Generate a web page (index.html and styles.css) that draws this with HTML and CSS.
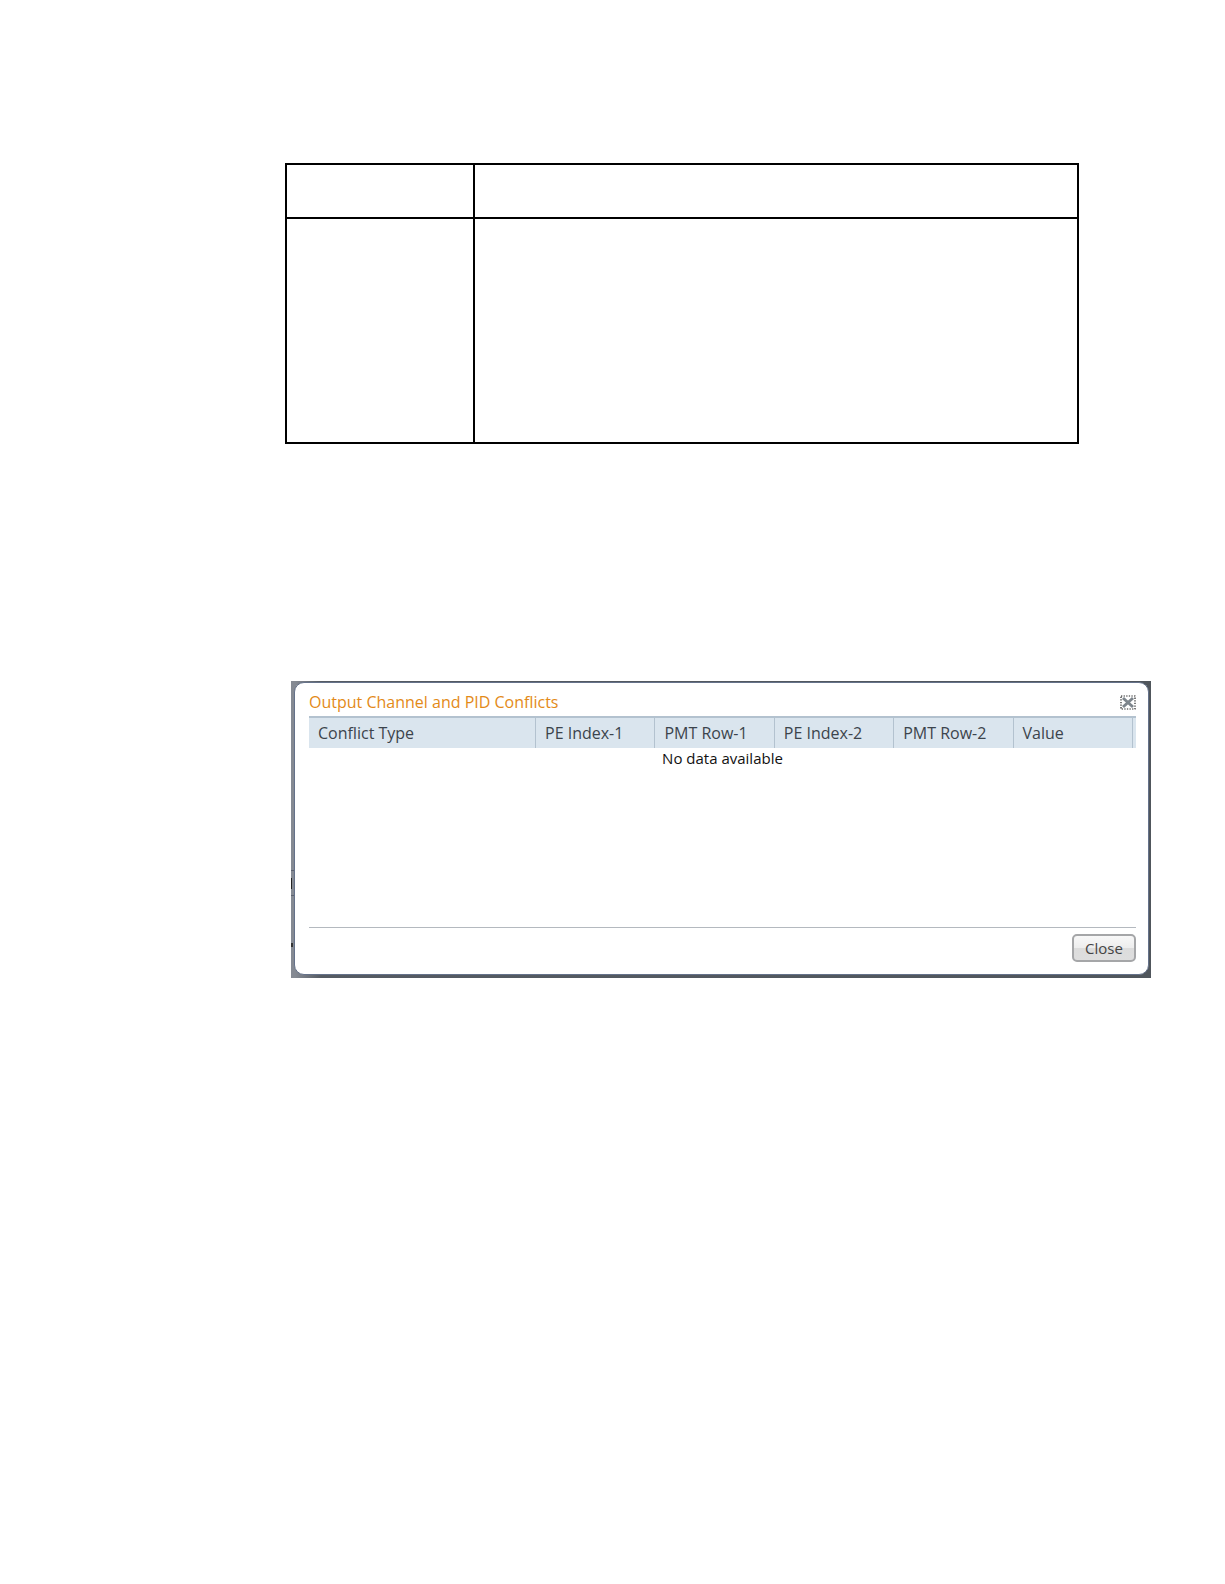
FILE: index.html
```html
<!DOCTYPE html>
<html lang="en">
<head>
<meta charset="utf-8">
<title>Output Channel and PID Conflicts</title>
<link rel="stylesheet" href="styles.css">
</head>
<body>
<main class="page">
  <table class="reference">
    <colgroup><col class="reference-term"><col></colgroup>
    <tbody>
      <tr class="reference-head"><td></td><td></td></tr>
      <tr class="reference-body"><td></td><td></td></tr>
    </tbody>
  </table>

  <div class="backdrop">
    <section class="dialog" role="dialog" aria-labelledby="dialog-title">
      <header class="dialog-header">
        <h1 class="dialog-title" id="dialog-title">Output Channel and PID Conflicts</h1>
        <button class="dismiss" type="button" aria-label="Dismiss">
          <svg width="16" height="15" viewBox="0 0 16 15" fill="none">
            <rect x="1" y="1" width="14" height="13" stroke="#222" stroke-width="1.2" stroke-dasharray="1.3 1.3"/>
            <path d="M3 3 13 12M13 3 3 12" stroke="#7d858c" stroke-width="3"/>
          </svg>
        </button>
      </header>
      <div class="grid-area">
        <table class="conflicts">
          <colgroup><col class="col-type"><col><col><col><col><col><col class="col-end"></colgroup>
          <thead>
            <tr><th>Conflict Type</th><th>PE Index-1</th><th>PMT Row-1</th><th>PE Index-2</th><th>PMT Row-2</th><th>Value</th><td class="head-end"></td></tr>
          </thead>
          <tbody>
            <tr><td class="empty" colspan="7">No data available</td></tr>
          </tbody>
        </table>
      </div>
      <footer class="dialog-footer">
        <button class="close" type="button">Close</button>
      </footer>
    </section>
  </div>
</main>
</body>
</html>
```
FILE: styles.css
```css
* {
  box-sizing: border-box;
}

body {
  margin: 0;
  background: #fff;
  font-family: "Open Sans", "Noto Sans", sans-serif;
  font-size: 16px;
  line-height: 20px;
}

.page {
  padding: 163px 74px 64px 285px;
}

.reference {
  width: calc(100% - 72px);
  border-collapse: collapse;
  table-layout: fixed;
}

.reference td {
  border: 2px solid #000;
}

.reference-term {
  width: 188px;
}

.reference-head {
  height: 54px;
}

.reference-body {
  height: 225px;
}

.backdrop {
  margin: 237px 0 0 6px;
  padding: 1px 2px 3px 3px;
  background:
    linear-gradient(#222, #222) 0 197px / 1px 11px no-repeat,
    linear-gradient(#333, #333) 0 262px / 2px 4px no-repeat,
    linear-gradient(#5c6270, #5c6270) 0 189px / 3px 1px no-repeat,
    linear-gradient(#5c6270, #5c6270) 0 214px / 3px 1px no-repeat,
    linear-gradient(90deg, #858a93, #858a93 4px, #555b63 30px, #50565c);
}

.dialog {
  padding: 8px 12px 12px 14px;
  border: 1px solid #65728a;
  border-radius: 10px;
  background: #fff;
}

.dialog-header {
  display: flex;
  align-items: center;
  justify-content: space-between;
  height: 25px;
  padding-bottom: 3px;
}

.dialog-title {
  margin: 0;
  color: #e38a18;
  font-size: 16px;
  font-weight: 400;
}

.dismiss {
  display: flex;
  padding: 0;
  border: 0;
  background: none;
}

.grid-area {
  min-height: 212px;
  border-bottom: 1px solid #b4b9bf;
}

.conflicts {
  width: 100%;
  border-collapse: separate;
  border-spacing: 0;
  table-layout: fixed;
}

.col-type {
  width: 227px;
}

.col-end {
  width: 3px;
}

.conflicts th,
.head-end {
  height: 32px;
  border-top: 2px solid #b3c2cf;
  background: #dae5ee;
}

.conflicts th {
  padding: 0 0 1px 9px;
  border-right: 1px solid #b3c2cf;
  color: #3c444c;
  font-weight: 400;
  text-align: left;
}

.head-end,
.empty {
  padding: 0;
}

.empty {
  color: #111;
  font-size: 15px;
  text-align: center;
}

.dialog-footer {
  display: flex;
  justify-content: flex-end;
  padding-top: 6px;
}

.close {
  width: 64px;
  height: 28px;
  padding: 0;
  border: 2px solid #a5a6a8;
  border-radius: 5px;
  background: linear-gradient(#f8f8f8, #ededed 50%, #dcdcdc 51%, #dedede);
  color: #444;
  font-family: inherit;
  font-size: 15px;
}
```
